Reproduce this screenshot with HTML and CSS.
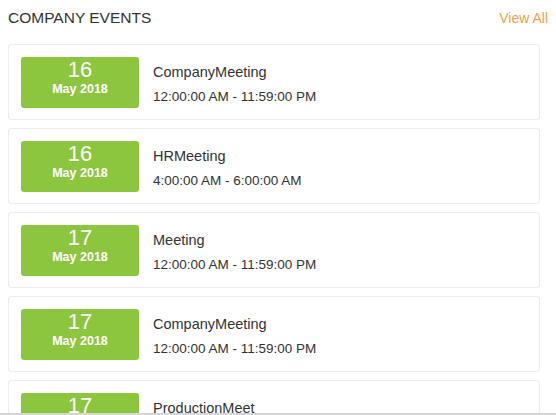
FILE: index.html
```html
<!DOCTYPE html>
<html>
<head>
<meta charset="utf-8">
<link rel="stylesheet" href="styles.css">
</head>
<body>
<div class="panel">
  <div class="header">
    <h2 class="title">COMPANY EVENTS</h2>
    <a class="view-all">View All</a>
  </div>
  <div class="list">
    <div class="card">
      <div class="date"><span class="day">16</span><span class="month">May 2018</span></div>
      <div class="info"><div class="name">CompanyMeeting</div><div class="time">12:00:00 AM - 11:59:00 PM</div></div>
    </div>
    <div class="card">
      <div class="date"><span class="day">16</span><span class="month">May 2018</span></div>
      <div class="info"><div class="name">HRMeeting</div><div class="time">4:00:00 AM - 6:00:00 AM</div></div>
    </div>
    <div class="card">
      <div class="date"><span class="day">17</span><span class="month">May 2018</span></div>
      <div class="info"><div class="name">Meeting</div><div class="time">12:00:00 AM - 11:59:00 PM</div></div>
    </div>
    <div class="card">
      <div class="date"><span class="day">17</span><span class="month">May 2018</span></div>
      <div class="info"><div class="name">CompanyMeeting</div><div class="time">12:00:00 AM - 11:59:00 PM</div></div>
    </div>
    <div class="card">
      <div class="date"><span class="day">17</span><span class="month">May 2018</span></div>
      <div class="info"><div class="name">ProductionMeet</div><div class="time">12:00:00 AM - 11:59:00 PM</div></div>
    </div>
  </div>
</div>
<div class="bottom-edge"></div>
</body>
</html>
```
FILE: styles.css
```css
html, body {
  margin: 0;
  padding: 0;
  background: #fff;
  overflow: hidden;
}
body {
  font-family: "Liberation Sans", Arial, sans-serif;
  color: #333;
}
.panel {
  padding: 7px 8px 0 8px;
}
.header {
  display: flex;
  justify-content: space-between;
  align-items: center;
  height: 22px;
}
.title {
  margin: 0;
  font-size: 15.5px;
  font-weight: normal;
  color: #333;
}
.view-all {
  font-size: 14px;
  color: #f5a04c;
  text-decoration: none;
}
.list {
  display: flex;
  flex-direction: column;
  gap: 8px;
  margin-top: 15px;
  width: 532px;
}
.card {
  display: flex;
  align-items: center;
  border: 1px solid #ececec;
  border-radius: 3px;
  padding: 12px 12px 11px 12px;
  height: 51px;
}
.date {
  width: 118px;
  height: 51px;
  box-sizing: border-box;
  padding-top: 2px;
  flex: none;
  background: #8cc63f;
  border-radius: 3px;
  color: #fff;
  display: flex;
  flex-direction: column;
  align-items: center;
  justify-content: flex-start;
}
.day {
  font-size: 22px;
  line-height: 22px;
}
.month {
  font-size: 12.5px;
  font-weight: bold;
  line-height: 16px;
}
.info {
  margin-left: 14px;
  display: flex;
  flex-direction: column;
  gap: 7px;
  margin-top: 4px;
}
.name {
  font-size: 14.5px;
  line-height: 18px;
}
.time {
  font-size: 13.5px;
  line-height: 18px;
}
.bottom-edge {
  position: fixed;
  left: 0;
  right: 0;
  bottom: 0;
  height: 2px;
  background: #d6d6d6;
}
```
